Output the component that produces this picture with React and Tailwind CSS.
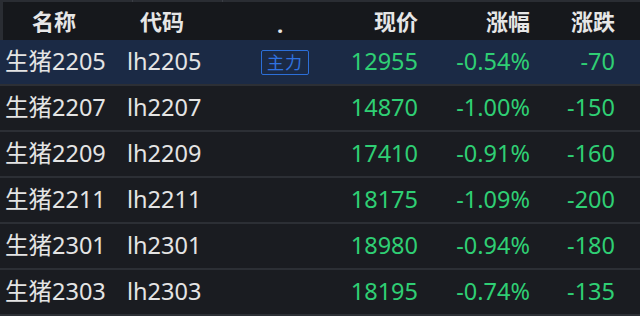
const rows = [
  { name: '生猪2205', code: 'lh2205', main: true, price: '12955', pct: '-0.54%', chg: '-70' },
  { name: '生猪2207', code: 'lh2207', price: '14870', pct: '-1.00%', chg: '-150' },
  { name: '生猪2209', code: 'lh2209', price: '17410', pct: '-0.91%', chg: '-160' },
  { name: '生猪2211', code: 'lh2211', price: '18175', pct: '-1.09%', chg: '-200' },
  { name: '生猪2301', code: 'lh2301', price: '18980', pct: '-0.94%', chg: '-180' },
  { name: '生猪2303', code: 'lh2303', price: '18195', pct: '-0.74%', chg: '-135' },
];

const font = { fontFamily: '"Noto Sans", "Noto Sans CJK SC", sans-serif' };

export default function App() {
  return (
    <div className="w-[640px] h-[316px] overflow-hidden bg-[#1a1c21]" style={font}>
      {/* top strip */}
      <div className="h-[2px] bg-[#2a2d33] flex">
        <div className="w-[133px] border-r border-[#3a3d44]" />
        <div className="w-[90px] border-r border-[#3a3d44]" />
      </div>

      {/* header */}
      <div className="h-[38px] flex items-center bg-[#16181c] border-l-[3px] border-[#2a2d33] text-[22px] font-bold text-[#e6e6e6] pl-[2px]">
        <div className="w-[122px] pl-[27px] leading-none">名称</div>
        <div className="w-[130px] pl-[13px] leading-none">代码</div>
        <div className="w-[56px] text-center leading-none pt-[6px] pr-[10px]">.</div>
        <div className="w-[105px] text-right leading-none">现价</div>
        <div className="w-[112px] text-right leading-none">涨幅</div>
        <div className="w-[85px] text-right leading-none">涨跌</div>
      </div>

      {rows.map((r) => (
        <div
          key={r.code}
          className={`flex items-center pl-[5px] text-[23.5px] leading-none ${
            r.main ? 'h-[44px] bg-[#1b2a45]' : 'h-[46px] border-t-2 border-[#2c2f35]'
          }`}
        >
          <div className="w-[122px] text-[#e4e4e4]">{r.name}</div>
          <div className="w-[130px] text-[#e4e4e4]">{r.code}</div>
          <div className="w-[56px] flex justify-center">
            {r.main && (
              <span className="border border-[#2c6fd8] rounded-[2px] text-[#2f72e0] text-[17px] leading-none px-[5px] py-[3px] tracking-[1px]">
                主力
              </span>
            )}
          </div>
          <div className="w-[105px] text-right text-[#2fcf74]">{r.price}</div>
          <div className="w-[112px] text-right text-[#2fcf74]">{r.pct}</div>
          <div className="w-[85px] text-right text-[#2fcf74]">{r.chg}</div>
        </div>
      ))}
      <div className="border-t-2 border-[#2c2f35]" />
    </div>
  );
}
